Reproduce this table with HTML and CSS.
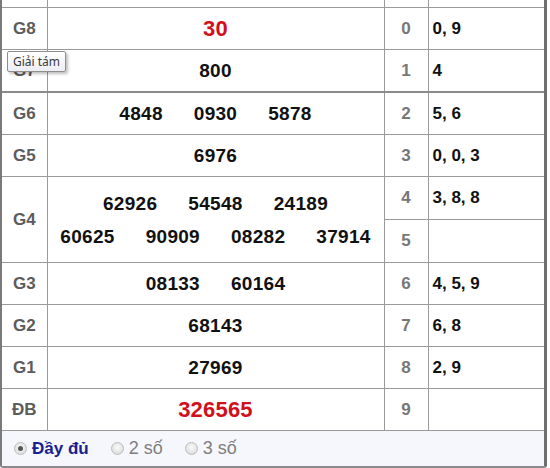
FILE: index.html
```html
<!DOCTYPE html>
<html lang="vi">
<head>
<meta charset="utf-8">
<title>Kết quả</title>
<link rel="stylesheet" href="styles.css">
</head>
<body>
<div class="box">
  <table class="kq">
    <colgroup>
      <col class="c-label"><col class="c-num"><col class="c-head"><col class="c-tail">
    </colgroup>
    <tr class="stub"><td></td><td></td><td></td><td></td></tr>
    <tr>
      <td class="lbl">G8</td>
      <td class="num"><div class="nums"><span class="big red">30</span></div></td>
      <td class="dau">0</td><td class="duoi">0, 9</td>
    </tr>
    <tr class="sep">
      <td class="lbl">G7</td>
      <td class="num"><div class="nums"><span>800</span></div></td>
      <td class="dau">1</td><td class="duoi">4</td>
    </tr>
    <tr>
      <td class="lbl">G6</td>
      <td class="num"><div class="nums"><span>4848</span><span>0930</span><span>5878</span></div></td>
      <td class="dau">2</td><td class="duoi">5, 6</td>
    </tr>
    <tr>
      <td class="lbl">G5</td>
      <td class="num"><div class="nums"><span>6976</span></div></td>
      <td class="dau">3</td><td class="duoi">0, 0, 3</td>
    </tr>
    <tr>
      <td class="lbl" rowspan="2">G4</td>
      <td class="num" rowspan="2">
        <div class="nums line"><span>62926</span><span>54548</span><span>24189</span></div>
        <div class="nums line"><span>60625</span><span>90909</span><span>08282</span><span>37914</span></div>
      </td>
      <td class="dau half">4</td><td class="duoi half">3, 8, 8</td>
    </tr>
    <tr>
      <td class="dau half low">5</td><td class="duoi half"></td>
    </tr>
    <tr>
      <td class="lbl">G3</td>
      <td class="num"><div class="nums"><span>08133</span><span>60164</span></div></td>
      <td class="dau">6</td><td class="duoi">4, 5, 9</td>
    </tr>
    <tr>
      <td class="lbl">G2</td>
      <td class="num"><div class="nums"><span>68143</span></div></td>
      <td class="dau">7</td><td class="duoi">6, 8</td>
    </tr>
    <tr>
      <td class="lbl">G1</td>
      <td class="num"><div class="nums"><span>27969</span></div></td>
      <td class="dau">8</td><td class="duoi">2, 9</td>
    </tr>
    <tr class="last">
      <td class="lbl">ĐB</td>
      <td class="num"><div class="nums"><span class="big red">326565</span></div></td>
      <td class="dau">9</td><td class="duoi"></td>
    </tr>
  </table>
  <div class="footer">
    <label class="opt active"><span class="radio checked"></span>Đầy đủ</label>
    <label class="opt"><span class="radio"></span>2 số</label>
    <label class="opt"><span class="radio"></span>3 số</label>
  </div>
  <div class="tooltip">Giải tám</div>
</div>
</body>
</html>
```
FILE: styles.css
```css
html, body {
  margin: 0;
  padding: 0;
  background: #fff;
}
body {
  font-family: "Liberation Sans", Arial, sans-serif;
}
.box {
  position: relative;
  width: 542px;
  border-left: 2px solid #7a7a7a;
  border-right: 3px solid #6e6e6e;
  border-bottom: 2px solid #8a8a8a;
  border-radius: 0 0 3px 3px;
}
.kq {
  width: 542px;
  border-collapse: collapse;
  table-layout: fixed;
}
.c-label { width: 45px; }
.c-num { width: 337px; }
.c-head { width: 44px; }
.c-tail { width: 116px; }
.kq td {
  border: 1px solid #9a9a9a;
  padding: 0;
  height: 41px;
  vertical-align: middle;
}
.kq td:first-child { border-left: none; }
.kq td:last-child { border-right: none; }
.kq .stub td { height: 7px; border-top: none; }
.kq .sep td { border-bottom: 2px solid #8a8a8a; }
.kq .last td { border-bottom: 1px solid #9a9a9a; }
.lbl {
  text-align: center;
  font-weight: bold;
  font-size: 17px;
  color: #5c5c5c;
}
.num {
  font-weight: bold;
  font-size: 19px;
  color: #111;
}
.nums {
  display: flex;
  justify-content: center;
  gap: 31px;
  letter-spacing: 0.3px;
}
.nums.line {
  line-height: 33px;
}
.big {
  font-size: 22px;
  letter-spacing: 0.2px;
}
.red { color: #d0111b; }
.dau {
  text-align: center;
  font-weight: bold;
  font-size: 17px;
  color: #777;
}
.kq td.half { height: 42px; }
.low { padding-top: 4px; }
.duoi {
  font-weight: bold;
  font-size: 17px;
  color: #111;
  padding-left: 4px !important;
}
.footer {
  display: flex;
  align-items: center;
  height: 35px;
  padding-left: 12px;
  gap: 22px;
  background: #f5f7fc;
}
.opt {
  display: flex;
  align-items: center;
  gap: 5px;
  font-size: 18px;
  color: #7e7e7e;
}
.opt.active {
  color: #1a1f8e;
  font-weight: bold;
  font-size: 17px;
}
.radio {
  width: 11px;
  height: 11px;
  border-radius: 50%;
  border: 1px solid #bdbdbd;
  background: radial-gradient(circle at 50% 40%, #fafafa 0%, #e0e0e0 70%, #cdcdcd 100%);
  display: inline-block;
  position: relative;
}
.radio.checked::after {
  content: "";
  position: absolute;
  left: 3px;
  top: 3px;
  width: 5px;
  height: 5px;
  border-radius: 50%;
  background: #555;
}
.tooltip {
  position: absolute;
  left: 5px;
  top: 51px;
  height: 19px;
  padding: 0 5px;
  line-height: 19px;
  font-family: "Noto Sans", "Open Sans", sans-serif;
  font-size: 12px;
  color: #3a3a3a;
  background: linear-gradient(#ffffff, #eceef4);
  border: 1px solid #8e8e8e;
  border-radius: 2px;
  box-shadow: 2px 2px 3px rgba(0,0,0,0.25);
}
```
